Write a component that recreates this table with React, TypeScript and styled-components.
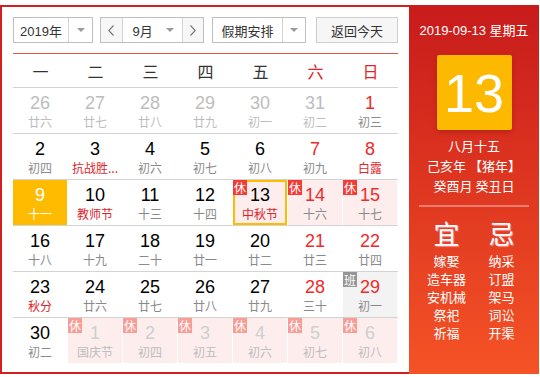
import React from 'react';
import styled, { createGlobalStyle, css } from 'styled-components';

const GlobalStyle = createGlobalStyle`
  body {
    margin: 0;
    background: #fff;
    font-family: Arial, "Liberation Sans", "Noto Sans CJK SC", sans-serif;
  }
`;

type Badge = 'rest' | 'work';

interface Day {
  n: number;
  lunar: string;
  other?: boolean; // outside current month
  redNum?: boolean;
  redLunar?: boolean;
  badge?: Badge;
  selected?: boolean;
  today?: boolean;
}

const weeks: Day[][] = [
  [
    { n: 26, lunar: '廿六', other: true },
    { n: 27, lunar: '廿七', other: true },
    { n: 28, lunar: '廿八', other: true },
    { n: 29, lunar: '廿九', other: true },
    { n: 30, lunar: '初一', other: true },
    { n: 31, lunar: '初二', other: true },
    { n: 1, lunar: '初三', redNum: true },
  ],
  [
    { n: 2, lunar: '初四' },
    { n: 3, lunar: '抗战胜...', redLunar: true },
    { n: 4, lunar: '初六' },
    { n: 5, lunar: '初七' },
    { n: 6, lunar: '初八' },
    { n: 7, lunar: '初九', redNum: true },
    { n: 8, lunar: '白露', redNum: true, redLunar: true },
  ],
  [
    { n: 9, lunar: '十一', selected: true },
    { n: 10, lunar: '教师节', redLunar: true },
    { n: 11, lunar: '十三' },
    { n: 12, lunar: '十四' },
    { n: 13, lunar: '中秋节', redLunar: true, badge: 'rest', today: true },
    { n: 14, lunar: '十六', redNum: true, badge: 'rest' },
    { n: 15, lunar: '十七', redNum: true, badge: 'rest' },
  ],
  [
    { n: 16, lunar: '十八' },
    { n: 17, lunar: '十九' },
    { n: 18, lunar: '二十' },
    { n: 19, lunar: '廿一' },
    { n: 20, lunar: '廿二' },
    { n: 21, lunar: '廿三', redNum: true },
    { n: 22, lunar: '廿四', redNum: true },
  ],
  [
    { n: 23, lunar: '秋分', redLunar: true },
    { n: 24, lunar: '廿六' },
    { n: 25, lunar: '廿七' },
    { n: 26, lunar: '廿八' },
    { n: 27, lunar: '廿九' },
    { n: 28, lunar: '三十', redNum: true },
    { n: 29, lunar: '初一', redNum: true, badge: 'work' },
  ],
  [
    { n: 30, lunar: '初二' },
    { n: 1, lunar: '国庆节', other: true, badge: 'rest' },
    { n: 2, lunar: '初四', other: true, badge: 'rest' },
    { n: 3, lunar: '初五', other: true, badge: 'rest' },
    { n: 4, lunar: '初六', other: true, badge: 'rest' },
    { n: 5, lunar: '初七', other: true, badge: 'rest' },
    { n: 6, lunar: '初八', other: true, badge: 'rest' },
  ],
];

const weekdays = ['一', '二', '三', '四', '五', '六', '日'];
const good = ['嫁娶', '造车器', '安机械', '祭祀', '祈福'];
const bad = ['纳采', '订盟', '架马', '词讼', '开渠'];

const Widget = styled.div`
  display: flex;
  width: 539px;
  height: 369px;
  margin-top: 5px;
`;

const Main = styled.div`
  width: 409px;
  box-sizing: border-box;
  border: 2px solid #d21f1f;
  border-right: none;
  padding: 10px 11px 0 11px;
`;

const Toolbar = styled.div`
  display: flex;
  height: 26px;
  font-size: 13px;
  color: #333;
`;

const Select = styled.div<{ width: number; gapLeft?: number }>`
  display: flex;
  box-sizing: border-box;
  width: ${({ width }) => width}px;
  margin-left: ${({ gapLeft }) => gapLeft || 0}px;
  border: 1px solid #bfbfbf;
  background: #fff;
`;

const SelectLabel = styled.div<{ width: number; align?: string }>`
  width: ${({ width }) => width}px;
  display: flex;
  align-items: center;
  justify-content: ${({ align }) => align || 'center'};
  padding-left: ${({ align }) => (align === 'flex-start' ? '10px' : '0')};
  box-sizing: border-box;
`;

const Caret = styled.div<{ divider?: boolean }>`
  flex: 1;
  display: flex;
  align-items: center;
  justify-content: center;
  border-left: ${({ divider }) => (divider ? '1px solid #d5d5d5' : 'none')};

  &::after {
    content: '';
    border-left: 4px solid transparent;
    border-right: 4px solid transparent;
    border-top: 4px solid #9a9a9a;
  }
`;

const MonthMiddle = styled.div`
  width: 59px;
  display: flex;
  border-left: 1px solid #d5d5d5;
  border-right: 1px solid #d5d5d5;
`;

const ArrowBtn = styled.div`
  flex: 1;
  display: flex;
  align-items: center;
  justify-content: center;
  background: #f7f7f7;
`;

const TodayBtn = styled.div`
  margin-left: auto;
  width: 82px;
  box-sizing: border-box;
  border: 1px solid #cfcfcf;
  background: #f6f6f6;
  display: flex;
  align-items: center;
  justify-content: center;
`;

const RedRule = styled.div`
  height: 1px;
  margin-top: 10px;
  background: #e45449;
`;

const Row = styled.div<{ last?: boolean }>`
  display: grid;
  grid-template-columns: repeat(7, 55px);
  border-bottom: ${({ last }) => (last ? 'none' : '1px solid #d3d3d3')};
`;

const WeekHead = styled.div<{ weekend: boolean }>`
  height: 33px;
  display: flex;
  align-items: center;
  justify-content: center;
  font-size: 16px;
  font-family: "Noto Sans CJK SC", sans-serif;
  color: ${({ weekend }) => (weekend ? '#e0242a' : '#333')};
`;

const Cell = styled.div<{ tone: 'plain' | 'rest' | 'work' | 'selected'; today?: boolean }>`
  position: relative;
  height: 45px;
  box-sizing: border-box;
  border-right: 1px solid transparent;
  background-clip: padding-box;
  padding-top: 5px;
  text-align: center;
  background-color: ${({ tone }) =>
    tone === 'rest' ? '#fdeded' : tone === 'work' ? '#f3f3f3' : tone === 'selected' ? '#ffbb00' : 'transparent'};
  ${({ today }) =>
    today &&
    css`
      box-shadow: inset 0 0 0 2px #ffbb00;
    `}
`;

const Num = styled.div<{ color: string }>`
  font-size: 18px;
  line-height: 20px;
  font-family: Arial, "Liberation Sans", sans-serif;
  color: ${({ color }) => color};
`;

const Lunar = styled.div<{ color: string }>`
  font-size: 12px;
  line-height: 18px;
  font-family: "Noto Sans CJK SC", sans-serif;
  color: ${({ color }) => color};
  white-space: nowrap;
`;

const Tag = styled.span<{ kind: Badge; faded?: boolean }>`
  position: absolute;
  top: 0;
  left: 0;
  width: 14px;
  height: 15px;
  font-size: 12px;
  line-height: 15px;
  text-align: center;
  color: #fff;
  font-family: "Noto Sans CJK SC", sans-serif;
  background: ${({ kind, faded }) => (kind === 'work' ? '#959595' : faded ? '#f89d95' : '#f53b35')};
`;

const Side = styled.div`
  width: 130px;
  height: 369px;
  background: linear-gradient(180deg, #c81b1b 0%, #f55326 100%);
  color: #fff;
  display: flex;
  flex-direction: column;
  align-items: center;
  padding-top: 16px;
  box-sizing: border-box;
  font-family: Arial, "Liberation Sans", "Noto Sans CJK SC", sans-serif;
`;

const DateLine = styled.div`
  font-size: 13px;
  line-height: 20px;
  white-space: nowrap;
`;

const BigDay = styled.div`
  margin-top: 14px;
  width: 75px;
  height: 75px;
  background: #fdb900;
  border-radius: 2px;
  box-shadow: 0 2px 5px rgba(120, 20, 0, 0.35);
  display: flex;
  align-items: center;
  justify-content: center;
  font-size: 54px;
  font-family: Arial, "Liberation Sans", sans-serif;
  color: #fff;
`;

const LunarInfo = styled.div`
  margin-top: 6px;
  font-size: 13px;
  line-height: 20px;
  text-align: center;
  font-family: "Noto Sans CJK SC", sans-serif;
`;

const Divider = styled.div`
  margin-top: 9px;
  width: 110px;
  height: 2px;
  background: rgba(255, 255, 255, 0.35);
`;

const Almanac = styled.div`
  margin-top: 11px;
  display: grid;
  grid-template-columns: 55px 55px;
  text-align: center;
  font-family: "Noto Sans CJK SC", sans-serif;
`;

const AlmanacHead = styled.div`
  font-size: 26px;
  line-height: 30px;
  font-weight: 400;
  text-shadow: 1px 1px 1px rgba(255, 170, 170, 0.8);
  margin-bottom: 4px;
`;

const AlmanacItem = styled.div`
  font-size: 13px;
  line-height: 18px;
`;

function Chevron({ dir }: { dir: 'l' | 'r' }) {
  return (
    <svg width='6' height='11' viewBox='0 0 6 11'>
      <polyline
        points={dir === 'l' ? '5.5,0.5 0.8,5.5 5.5,10.5' : '0.5,0.5 5.2,5.5 0.5,10.5'}
        fill='none'
        stroke='#777'
        strokeWidth='1.1'
      />
    </svg>
  );
}

function DayCell({ d }: { d: Day }) {
  const tone = d.selected ? 'selected' : d.badge === 'rest' ? 'rest' : d.badge === 'work' ? 'work' : 'plain';

  let numColor = '#000';
  if (d.other) numColor = d.badge ? '#cfcfcf' : '#bdbdbd';
  else if (d.selected) numColor = '#fff';
  else if (d.redNum) numColor = '#ee2b2b';

  let lunarColor = '#8a8a8a';
  if (d.other) lunarColor = '#bdbdbd';
  else if (d.selected) lunarColor = '#fff';
  else if (d.redLunar) lunarColor = '#e0242a';

  return (
    <Cell tone={tone} today={d.today}>
      {d.badge && <Tag kind={d.badge} faded={d.other}>{d.badge === 'rest' ? '休' : '班'}</Tag>}
      <Num color={numColor}>{d.n}</Num>
      <Lunar color={lunarColor}>{d.lunar}</Lunar>
    </Cell>
  );
}

export default function App() {
  return (
    <>
      <GlobalStyle />
      <Widget>
        <Main>
          <Toolbar>
            <Select width={80}>
              <SelectLabel width={54}>2019年</SelectLabel>
              <Caret divider />
            </Select>
            <Select width={104} gapLeft={7}>
              <ArrowBtn>
                <Chevron dir='l' />
              </ArrowBtn>
              <MonthMiddle>
                <SelectLabel width={36} align='flex-start'>
                  9月
                </SelectLabel>
                <Caret />
              </MonthMiddle>
              <ArrowBtn>
                <Chevron dir='r' />
              </ArrowBtn>
            </Select>
            <Select width={94} gapLeft={8}>
              <SelectLabel width={69}>假期安排</SelectLabel>
              <Caret divider />
            </Select>
            <TodayBtn>返回今天</TodayBtn>
          </Toolbar>
          <RedRule />
          <Row>
            {weekdays.map((w, i) => (
              <WeekHead key={w} weekend={i >= 5}>
                {w}
              </WeekHead>
            ))}
          </Row>
          {weeks.map((week, i) => (
            <Row key={i} last={i === weeks.length - 1}>
              {week.map((d, j) => (
                <DayCell key={j} d={d} />
              ))}
            </Row>
          ))}
        </Main>
        <Side>
          <DateLine>2019-09-13 星期五</DateLine>
          <BigDay>13</BigDay>
          <LunarInfo>
            八月十五
            <br />
            己亥年 【猪年】
            <br />
            癸酉月 癸丑日
          </LunarInfo>
          <Divider />
          <Almanac>
            <div>
              <AlmanacHead>宜</AlmanacHead>
              {good.map((g) => (
                <AlmanacItem key={g}>{g}</AlmanacItem>
              ))}
            </div>
            <div>
              <AlmanacHead>忌</AlmanacHead>
              {bad.map((b) => (
                <AlmanacItem key={b}>{b}</AlmanacItem>
              ))}
            </div>
          </Almanac>
        </Side>
      </Widget>
    </>
  );
}
